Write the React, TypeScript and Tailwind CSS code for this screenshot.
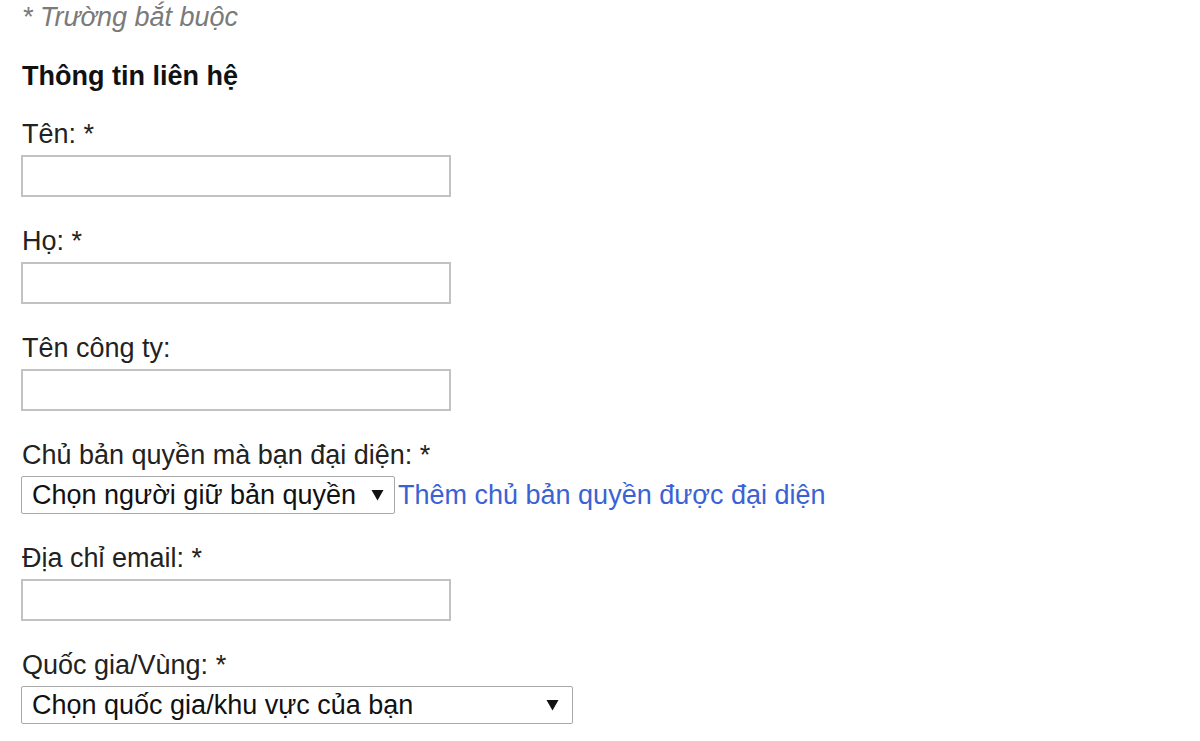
import React from "react";

const font = { fontFamily: '"Liberation Sans", Arial, sans-serif' };

function Arrow() {
  return (
    <svg width="13" height="12" viewBox="0 0 13 12" className="shrink-0">
      <path d="M0.5 1 L12.5 1 L6.5 11.5 Z" fill="#111" />
    </svg>
  );
}

function Label({ children }: { children: React.ReactNode }) {
  return <div className="leading-[31px] mb-[5px] pl-[1px] text-[#222]">{children}</div>;
}

function TextInput() {
  return (
    <input
      type="text"
      className="block w-[430px] h-[42px] border-2 border-[#c2c2c2] bg-white outline-none"
    />
  );
}

export default function App() {
  return (
    <div
      className="min-h-[741px] w-[1200px] bg-white pl-[21px] pt-[2px] text-[27px] text-[#222]"
      style={font}
    >
      <p className="italic leading-[31px] text-[#7a7a7a] pl-[1px]">* Trường bắt buộc</p>
      <h2 className="font-bold leading-[31px] mt-[28px] pl-[1px] text-[#111]">Thông tin liên hệ</h2>

      <div className="mt-[27px] flex flex-col gap-[29px]">
        <div>
          <Label>Tên: *</Label>
          <TextInput />
        </div>
        <div>
          <Label>Họ: *</Label>
          <TextInput />
        </div>
        <div>
          <Label>Tên công ty:</Label>
          <TextInput />
        </div>
        <div>
          <Label>Chủ bản quyền mà bạn đại diện: *</Label>
          <div className="flex items-center">
            <div className="flex h-[38px] w-[374px] items-center justify-between rounded-[2px] border-[1.5px] border-[#a9a9a9] bg-white pl-[10px] pr-[10px] text-[#111]">
              <span className="leading-[31px]">Chọn người giữ bản quyền</span>
              <Arrow />
            </div>
            <a href="#" className="ml-[3px] leading-[31px] text-[#3b62d4]">
              Thêm chủ bản quyền được đại diện
            </a>
          </div>
        </div>
        <div>
          <Label>Địa chỉ email: *</Label>
          <TextInput />
        </div>
        <div>
          <Label>Quốc gia/Vùng: *</Label>
          <div className="flex h-[38px] w-[552px] items-center justify-between rounded-[2px] border-[1.5px] border-[#a9a9a9] bg-white pl-[10px] pr-[13px] text-[#111]">
            <span className="leading-[31px]">Chọn quốc gia/khu vực của bạn</span>
            <Arrow />
          </div>
        </div>
      </div>
    </div>
  );
}
